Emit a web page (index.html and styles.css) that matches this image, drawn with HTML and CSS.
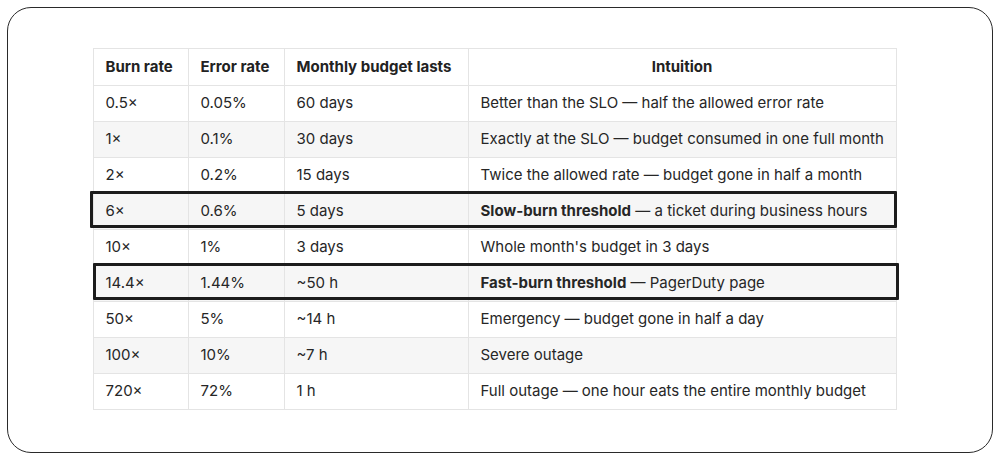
FILE: index.html
```html
<!DOCTYPE html>
<html>
<head>
<meta charset="utf-8">
<link rel="stylesheet" href="styles.css">
</head>
<body>
<div class="frame">
  <div class="wrap">
    <table class="burn">
      <colgroup>
        <col class="c1"><col class="c2"><col class="c3"><col class="c4">
      </colgroup>
      <thead>
        <tr><th class="left">Burn rate</th><th class="left">Error rate</th><th class="left">Monthly budget lasts</th><th>Intuition</th></tr>
      </thead>
      <tbody>
        <tr><td>0.5×</td><td>0.05%</td><td>60 days</td><td>Better than the SLO — half the allowed error rate</td></tr>
        <tr><td>1×</td><td>0.1%</td><td>30 days</td><td>Exactly at the SLO — budget consumed in one full month</td></tr>
        <tr><td>2×</td><td>0.2%</td><td>15 days</td><td>Twice the allowed rate — budget gone in half a month</td></tr>
        <tr><td>6×</td><td>0.6%</td><td>5 days</td><td><strong>Slow-burn threshold</strong> — a ticket during business hours</td></tr>
        <tr><td>10×</td><td>1%</td><td>3 days</td><td>Whole month's budget in 3 days</td></tr>
        <tr><td>14.4×</td><td>1.44%</td><td>~50 h</td><td><strong>Fast-burn threshold</strong> — PagerDuty page</td></tr>
        <tr><td>50×</td><td>5%</td><td>~14 h</td><td>Emergency — budget gone in half a day</td></tr>
        <tr><td>100×</td><td>10%</td><td>~7 h</td><td>Severe outage</td></tr>
        <tr><td>720×</td><td>72%</td><td>1 h</td><td>Full outage — one hour eats the entire monthly budget</td></tr>
      </tbody>
    </table>
    <div class="mark mark-slow"></div>
    <div class="mark mark-fast"></div>
  </div>
</div>
</body>
</html>
```

FILE: styles.css
```css
html, body {
  margin: 0;
  padding: 0;
  background: #ffffff;
}
body {
  font-family: Inter, "Noto Sans", "Liberation Sans", sans-serif;
  color: #262626;
}
.frame {
  margin: 7px;
  height: 446px;
  box-sizing: border-box;
  border: 1.5px solid #2a2a2a;
  border-radius: 24px;
  padding: 39.5px 0 0 84.5px;
}
.wrap {
  position: relative;
  width: 803px;
}
.burn {
  border-collapse: collapse;
  table-layout: fixed;
  width: 803px;
  font-size: 15px;
}
.c1 { width: 95px; }
.c2 { width: 96px; }
.c3 { width: 184px; }
.c4 { width: 428px; }
.burn th, .burn td {
  border: 1px solid #e4e4e4;
  padding: 0 12px;
  height: 36px;
  box-sizing: border-box;
  white-space: nowrap;
  vertical-align: middle;
  line-height: 18px;
}
.burn th {
  height: 37px;
  font-weight: 700;
  text-align: center;
  color: #222222;
}
.burn th.left {
  text-align: left;
}
.burn td {
  text-align: left;
  font-weight: 400;
}
.burn td strong {
  font-weight: 700;
}
.burn tbody tr:nth-child(even) td {
  background: #f6f6f6;
}
.mark {
  position: absolute;
  border: 3px solid #1c1c1c;
  box-sizing: border-box;
  border-radius: 1px;
  pointer-events: none;
}
.mark-slow {
  left: -3px;
  top: 143px;
  width: 807px;
  height: 37px;
}
.mark-fast {
  left: 0px;
  top: 215px;
  width: 806px;
  height: 37px;
}
```
